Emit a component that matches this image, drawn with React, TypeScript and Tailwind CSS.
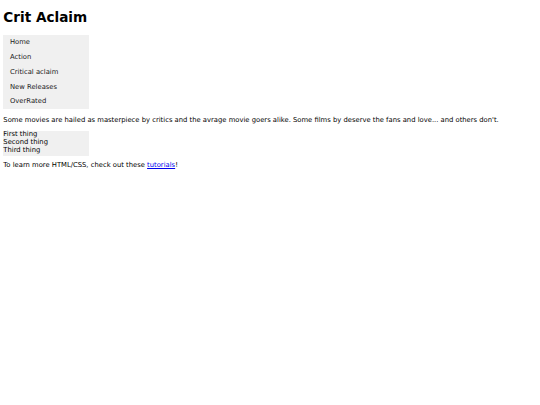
import React from 'react';

// 메뉴 항목
const menu = ['Home', 'Action', 'Critical aclaim', 'New Releases', 'OverRated'];
const things = ['First thing', 'Second thing', 'Third thing'];

export default function App() {
  return (
    <div className="min-h-[405px] bg-white px-[3.33px] py-[3.33px] text-[6.8px] leading-[1.164] text-black [font-family:'DejaVu_Sans',sans-serif]">
      <h1 className="mt-[6.8px] mb-[9.4px] text-[13.6px] font-bold leading-[1.164]">Crit Aclaim</h1>

      <ul className="w-[85.3px] bg-[#f0f0f0]">
        {menu.map((item) => (
          <li key={item} className="flex h-[14.7px] items-center pl-[6.67px] pt-[1.5px] text-[#222]">
            {item}
          </li>
        ))}
      </ul>

      <p className="mt-[8.2px] mb-[6px]">
        Some movies are hailed as masterpiece by critics and the avrage movie goers alike. Some films by deserve the fans and love... and others don't.
      </p>

      <ul className="w-[85.3px] bg-[#f0f0f0] py-[0.5px]">
        {things.map((item) => (
          <li key={item}>{item}</li>
        ))}
      </ul>

      <p className="my-[6.8px]">
        To learn more HTML/CSS, check out these <a href="#" className="text-[#0000ee] underline">tutorials</a>!
      </p>
    </div>
  );
}
